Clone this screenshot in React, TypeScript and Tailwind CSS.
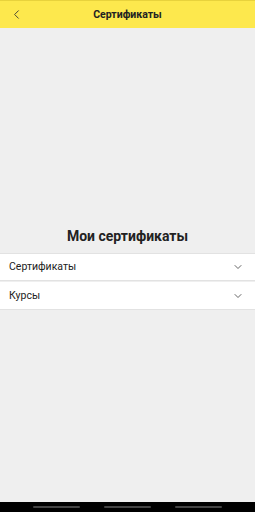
import { ChevronDown, ChevronLeft } from "lucide-react";

const sections = ["Сертификаты", "Курсы"];

export default function App() {
  return (
    <div className="flex h-[512px] w-[255px] flex-col bg-[#efefef] font-['Roboto',sans-serif] text-[#222]">
      {/* Header */}
      <header className="relative flex h-[28px] items-center justify-center border-t border-[#e8d23c] bg-[#fde84d]">
        <button className="absolute left-[9px] top-[6px] text-[#333]">
          <ChevronLeft size={15} strokeWidth={1.4} />
        </button>
        <h1 className="text-[10.5px] font-bold text-[#222]">Сертификаты</h1>
      </header>

      {/* Content */}
      <main className="flex-1 pt-[198px]">
        <h2 className="mb-[7px] text-center text-[14px] leading-[20px] font-bold text-[#222]">Мои сертификаты</h2>
        <div>
          {sections.map((s) => (
            <div
              key={s}
              className="flex h-[28px] items-center justify-between border-t border-b border-[#e2e2e2] bg-white pl-[9px] pr-[11px] [&+&]:border-t-0 [&+&]:mt-[1px]"
            >
              <span className="text-[10.5px] text-[#222]">{s}</span>
              <ChevronDown size={12} strokeWidth={1.5} className="text-[#333]" />
            </div>
          ))}
        </div>
      </main>

      {/* Android nav bar */}
      <footer className="flex h-[10px] items-center justify-center gap-[24px] bg-black">
        <span className="h-[2px] w-[47px] rounded bg-[#444]" />
        <span className="h-[2px] w-[47px] rounded bg-[#444]" />
        <span className="h-[2px] w-[47px] rounded bg-[#444]" />
      </footer>
    </div>
  );
}
